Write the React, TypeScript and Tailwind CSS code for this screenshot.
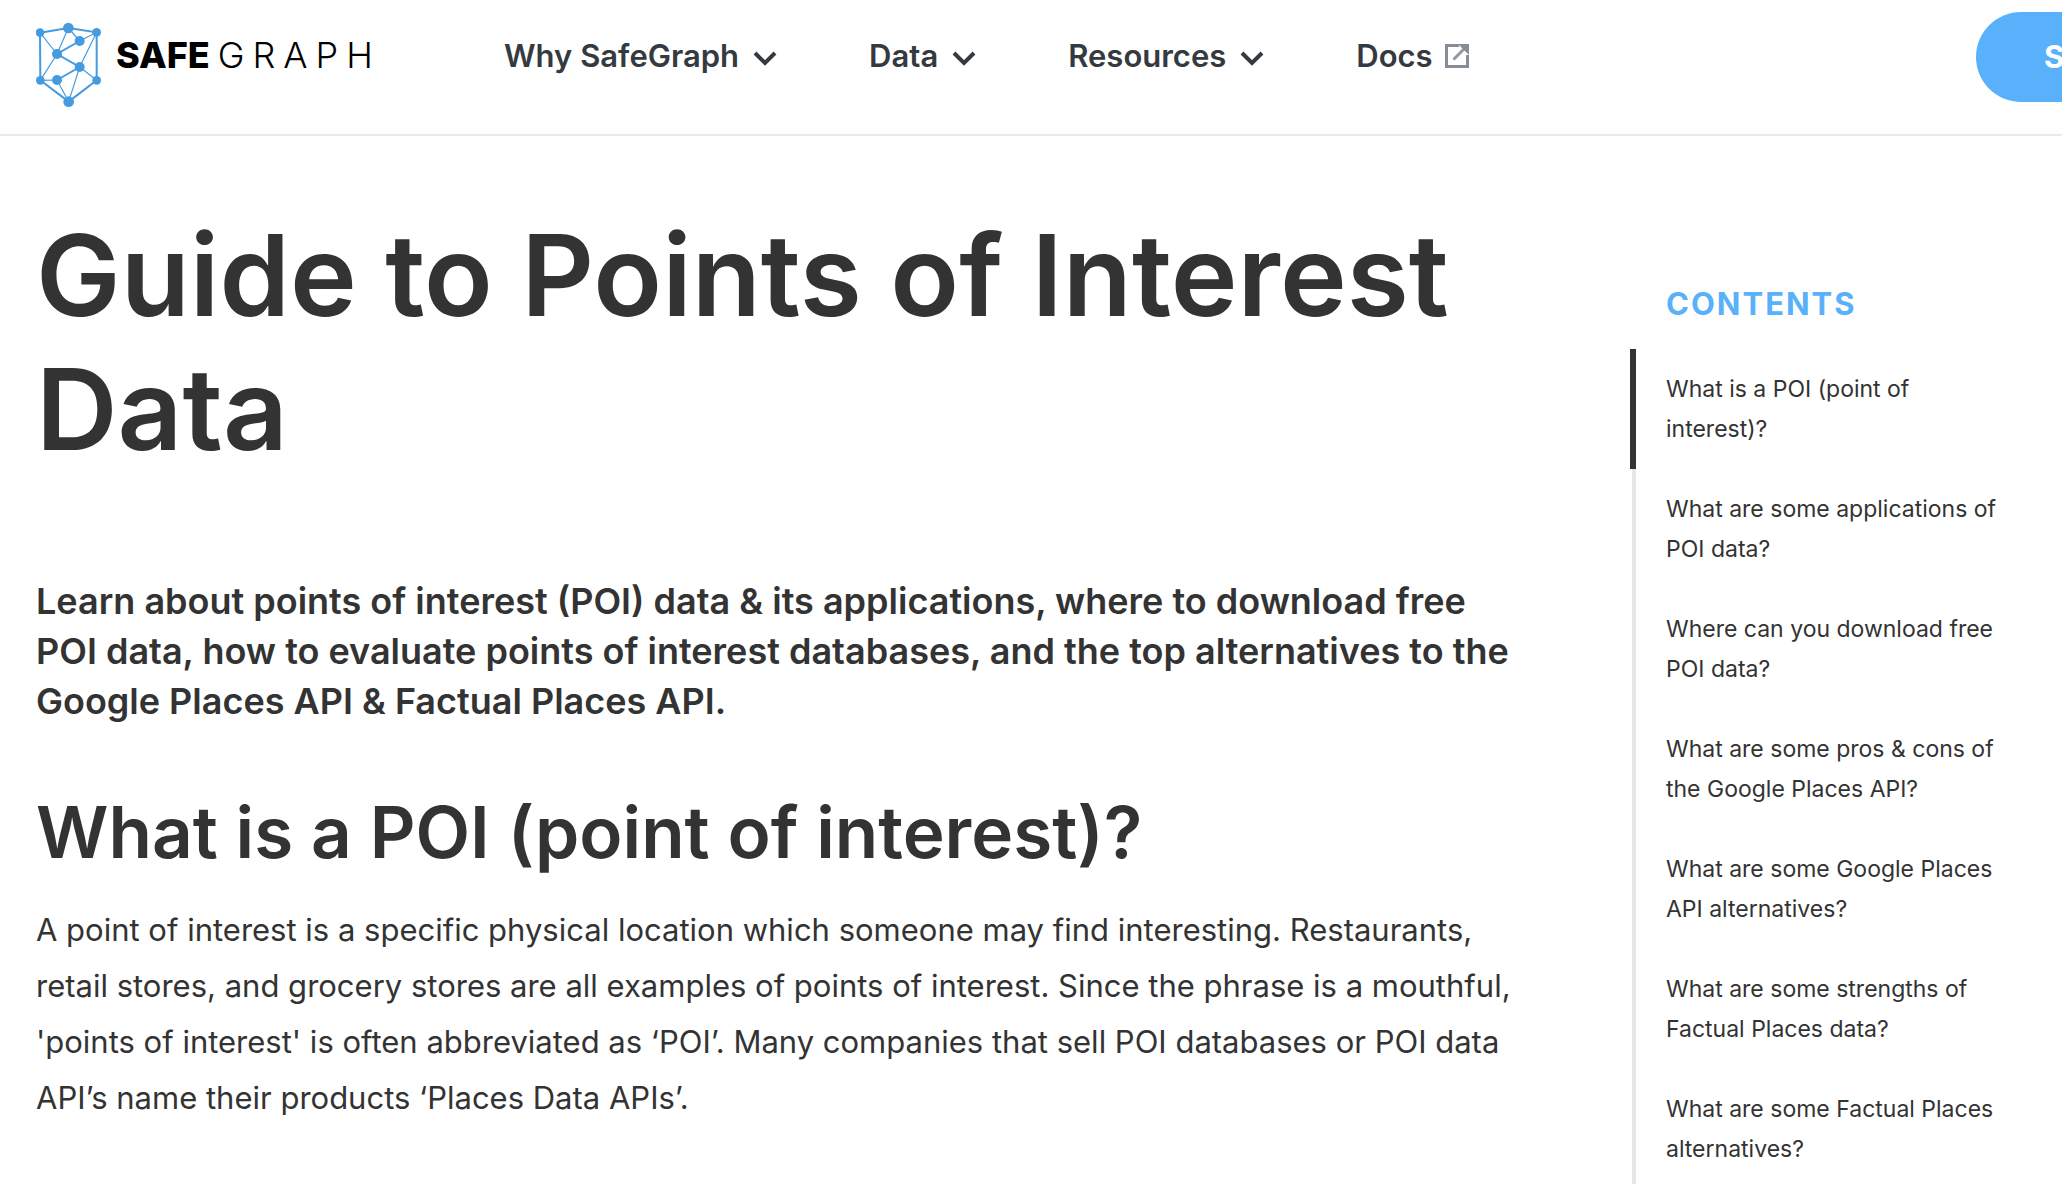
const thickEdges =
  "M60 68L145 54L230 67V211L146 275L61 211ZM179 93L111 132L179 171L111 210";
const thinEdges =
  "M60 68L111 132M145 54L111 132M145 54L179 93M230 67L179 93M230 67L179 171M111 132L61 211M61 211L111 210M111 210L146 275M179 171L146 275M179 171L230 211";
const nodes: [number, number, number][] = [
  [60, 68, 13],
  [145, 54, 16],
  [230, 67, 13],
  [179, 93, 15],
  [111, 132, 15],
  [179, 171, 15],
  [61, 211, 13],
  [111, 210, 15],
  [230, 211, 13],
  [146, 275, 16],
];

const menus = ["Why SafeGraph", "Data", "Resources"];

const contents = [
  "What is a POI (point of interest)?",
  "What are some applications of POI data?",
  "Where can you download free POI data?",
  "What are some pros & cons of the Google Places API?",
  "What are some Google Places API alternatives?",
  "What are some strengths of Factual Places data?",
  "What are some Factual Places alternatives?",
];

function Logo() {
  return (
    <a href="#home" className="flex w-[468px] shrink-0 items-start text-black">
      <svg viewBox="48 6 198 288" className="h-24 w-[66px]" fill="none" stroke="#459be0" aria-hidden="true">
        <path d={thickEdges} strokeWidth="6" />
        <path d={thinEdges} strokeWidth="3.5" />
        {nodes.map(([x, y, r]) => (
          <circle key={`${x}-${y}`} cx={x} cy={y} r={r} fill="#459be0" stroke="none" />
        ))}
      </svg>
      <span className="ml-3.5 flex h-[86px] items-center gap-2 text-[36px] leading-none">
        <span className="font-extrabold">SAFE</span>
        <span className="font-light tracking-[8px]">GRAPH</span>
      </span>
    </a>
  );
}

function Chevron() {
  return (
    <svg viewBox="0 0 24 16" className="mt-1 h-4 w-6" fill="none" stroke="currentColor" strokeWidth="4" aria-hidden="true">
      <path d="M2 3L12 13L22 3" />
    </svg>
  );
}

function ExternalIcon() {
  return (
    <svg viewBox="0 0 24 24" className="size-6" fill="none" stroke="#868d95" aria-hidden="true">
      <path d="M14 1.5H1.5V22.5H22.5V11" strokeWidth="3" />
      <path d="M8.5 15.5L19 5" strokeWidth="3" stroke="#9298a0" />
      <path d="M13 0H24V11Z" fill="#868d95" stroke="none" />
    </svg>
  );
}

export default function App() {
  return (
    <div className="h-screen overflow-hidden bg-white font-['Inter',sans-serif] text-[#333333]">
      <header className="flex items-start overflow-hidden border-b-2 border-[#e5eaee] pt-3 pb-[26px] pl-9">
        <Logo />
        <nav className="flex h-[88px] grow items-center gap-[92px] text-[31px] font-semibold whitespace-nowrap text-[#343a40]">
          {menus.map((label) => (
            <button key={label} type="button" className="flex items-center gap-3.5">
              {label}
              <Chevron />
            </button>
          ))}
          <a href="#docs" className="flex items-center gap-3">
            Docs
            <ExternalIcon />
          </a>
        </nav>
        <button
          type="button"
          className="-mr-[214px] h-[90px] w-[300px] shrink-0 rounded-full bg-[#58b1fa] pl-[68px] text-left text-[31px] font-bold text-white"
        >
          S
        </button>
      </header>

      <div className="flex items-start justify-between pl-9">
        <main className="w-[1510px] pt-[72px]">
          <h1 className="text-[113px] leading-[134px] font-semibold">Guide to Points of Interest Data</h1>
          <p className="mt-[100px] max-w-[1490px] text-[36px] leading-[50px] font-semibold">
            Learn about points of interest (POI) data &amp; its applications, where to download free POI data, how to
            evaluate points of interest databases, and the top alternatives to the Google Places API &amp; Factual
            Places API.
          </p>
          <h2 className="mt-[66px] text-[71px] leading-[80px] font-semibold">What is a POI (point of interest)?</h2>
          <p className="mt-[30px] text-[31px] leading-[56px]">
            A point of interest is a specific physical location which someone may find interesting. Restaurants, retail
            stores, and grocery stores are all examples of points of interest. Since the phrase is a mouthful, 'points
            of interest' is often abbreviated as ‘POI’. Many companies that sell POI databases or POI data API’s name
            their products ‘Places Data APIs’.
          </p>
        </main>

        <aside className="w-[432px] pt-[145px]">
          <h2 className="pl-9 text-[31px] leading-[46px] font-bold tracking-[2px] text-[#58b1fa]">CONTENTS</h2>
          <ul className="mt-[22px] text-[23px] leading-[40px]">
            {contents.map((title, i) => (
              <li
                key={title}
                className={
                  i === 0
                    ? "border-l-6 border-[#333333]"
                    : "ml-0.5 border-l-4 border-[#e6e6e6]"
                }
              >
                <a href="#section" className="block w-[376px] py-5 pl-[30px]">
                  {title}
                </a>
              </li>
            ))}
          </ul>
        </aside>
      </div>
    </div>
  );
}
